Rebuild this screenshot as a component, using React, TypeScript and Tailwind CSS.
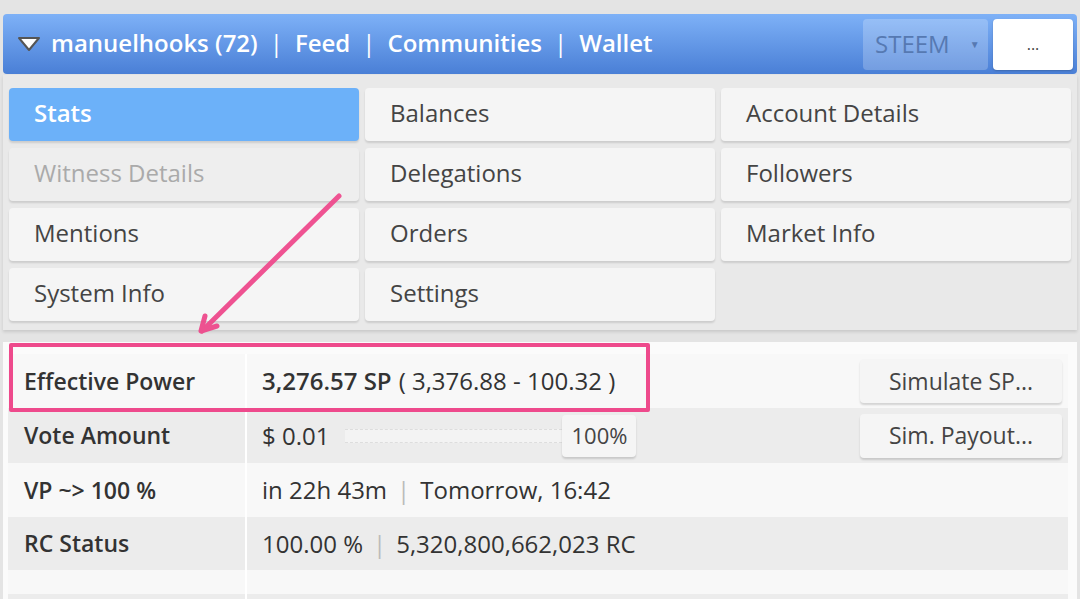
import React from 'react';

const tabs = [
  { label: 'Stats', state: 'active' },
  { label: 'Balances' },
  { label: 'Account Details' },
  { label: 'Witness Details', state: 'disabled' },
  { label: 'Delegations' },
  { label: 'Followers' },
  { label: 'Mentions' },
  { label: 'Orders' },
  { label: 'Market Info' },
  { label: 'System Info' },
  { label: 'Settings' },
];

const Tab = ({ label, state }: { label: string; state?: string }) => {
  let cls = 'bg-[#f5f5f5] text-[#444]';
  if (state === 'active') cls = 'bg-[#6cb1f9] text-white font-semibold';
  if (state === 'disabled') cls = 'bg-[#eeeeee] text-[#aaaaaa]';
  return (
    <div
      className={`h-[53px] rounded-[4px] flex items-center pl-[25px] pb-[3px] text-[24px] shadow-[0_2px_2px_rgba(0,0,0,0.12)] ${cls}`}
    >
      {label}
    </div>
  );
};

const Row = ({
  label,
  gray,
  h,
  children,
}: {
  label?: string;
  gray?: boolean;
  h: string;
  children?: React.ReactNode;
}) => (
  <div className={`flex ${h} ${gray ? 'bg-[#ececec]' : 'bg-[#f8f8f8]'}`}>
    <div className="w-[239px] shrink-0 flex items-center pl-[16px] font-semibold text-[23px] text-[#333] border-r-2 border-white">
      {label}
    </div>
    <div className="flex-1 flex items-center pl-[15px] pr-[6px] text-[#333]">{children}</div>
  </div>
);

const Btn = ({ children, className = '' }: { children: React.ReactNode; className?: string }) => (
  <div
    className={`h-[44px] rounded-[4px] bg-[#f5f5f5] flex items-center justify-center text-[23px] text-[#444] shadow-[0_2px_2px_rgba(0,0,0,0.15)] ${className}`}
  >
    {children}
  </div>
);

export default function App() {
  return (
    <div className="relative h-[599px] w-[1080px] overflow-hidden bg-[#e4e4e4] font-['Open_Sans',sans-serif]">
      {/* top bar */}
      <div className="pt-[14px] px-[3px]">
        <div className="h-[60px] rounded-[4px] bg-gradient-to-b from-[#7eb1f7] to-[#4a7fd6] flex items-center pl-[14px] pr-[4px] pb-[2px] text-white text-[24px] font-semibold">
          <svg width="24" height="16" viewBox="0 0 24 16" className="mr-[10px] mt-[2px]">
            <path d="M2 2 L22 2 L12 14 Z" fill="#fff" stroke="#555" strokeWidth="2" strokeLinejoin="round" />
          </svg>
          <span>manuelhooks (72)</span>
          <span className="mx-[12px] font-normal">|</span>
          <span>Feed</span>
          <span className="mx-[12px] font-normal">|</span>
          <span>Communities</span>
          <span className="mx-[12px] font-normal">|</span>
          <span>Wallet</span>
          <div className="ml-auto flex items-center gap-[5px] pt-[2px]">
            <div className="w-[125px] h-[51px] rounded-[4px] bg-[rgba(255,255,255,0.22)] flex items-center pl-[12px] text-[#5679b2] font-normal">
              STEEM
              <span className="ml-[20px] text-[10px]">▼</span>
            </div>
            <div className="w-[80px] h-[51px] rounded-[4px] bg-white flex items-center justify-center text-[#444] text-[16px] font-normal shadow-[0_1px_2px_rgba(0,0,0,0.2)]">
              ...
            </div>
          </div>
        </div>
      </div>

      {/* tabs */}
      <div className="mt-[1px] mx-[3px] bg-[#e9e9e9] px-[6px] pt-[13px] pb-[9px] shadow-[0_2px_3px_rgba(0,0,0,0.12)]">
        <div className="grid grid-cols-3 gap-x-[6px] gap-y-[7px]">
          {tabs.map((t) => (
            <Tab key={t.label} label={t.label} state={t.state} />
          ))}
        </div>
      </div>

      {/* stats table */}
      <div className="mt-[12px] mx-[3px] bg-[#fbfbfb] pt-[12px] pl-[5px] pr-[9px] h-[400px] text-[24px]">
        <Row label="Effective Power" h="h-[54px]">
          <span className="font-semibold">3,276.57 SP</span>
          <span className="ml-[7px]">( 3,376.88 - 100.32 )</span>
          <Btn className="ml-auto w-[202px]">Simulate SP...</Btn>
        </Row>
        <Row label="Vote Amount" gray h="h-[55px]">
          <span>$ 0.01</span>
          <div className="ml-[16px] w-[217px] h-[14px] border-t border-b border-dashed border-[#dddddd] bg-[#f3f3f3]" />
          <div className="w-[74px] h-[42px] rounded-[4px] bg-[#f5f5f5] flex items-center justify-center text-[22px] text-[#444] shadow-[0_2px_2px_rgba(0,0,0,0.15)]">
            100%
          </div>
          <Btn className="ml-auto w-[202px]">Sim. Payout...</Btn>
        </Row>
        <Row label="VP ~> 100 %" h="h-[54px]">
          <span>in 22h 43m</span>
          <span className="mx-[10px] text-[#bbb]">|</span>
          <span>Tomorrow, 16:42</span>
        </Row>
        <Row label="RC Status" gray h="h-[53px]">
          <span>100.00 %</span>
          <span className="mx-[10px] text-[#bbb]">|</span>
          <span>5,320,800,662,023 RC</span>
        </Row>
        <Row h="h-[24px]" />
        <Row gray h="h-[53px]" />
      </div>

      {/* annotation */}
      <div className="absolute left-[9px] top-[343px] w-[641px] h-[69px] border-[4px] border-[#ee4a8c] rounded-[2px]" />
      <svg className="absolute left-0 top-0" width="1080" height="599" viewBox="0 0 1080 599">
        <g stroke="#ee4a8c" strokeWidth="5" strokeLinecap="round" fill="none" opacity="0.95">
          <path d="M339 196 L202 331" />
          <path d="M205 316 L201 331 L217 326" strokeLinejoin="round" />
        </g>
      </svg>
    </div>
  );
}
